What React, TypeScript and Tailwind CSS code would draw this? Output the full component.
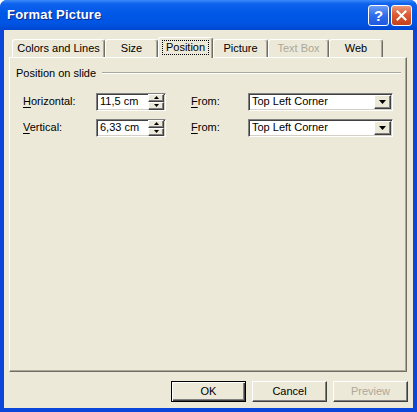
import React from "react";

const raised =
  "bg-[#ECE9D8] border border-t-white border-l-white border-r-[#404040] border-b-[#404040] shadow-[inset_-1px_-1px_0_#808080]";
const sunken =
  "bg-white border border-t-[#808080] border-l-[#808080] border-r-white border-b-white shadow-[inset_1px_1px_0_#404040,inset_-1px_-1px_0_#D4D0C8]";

function Tab({ label, width, selected, disabled }: { label: string; width: number; selected?: boolean; disabled?: boolean }) {
  if (selected) {
    return (
      <div
        className="relative z-10 -mb-px h-[21px] flex items-start justify-center pt-[3px] bg-[#ECE9D8] border-t border-l border-white border-r border-r-[#716F64] rounded-t-[3px] shadow-[inset_-1px_0_0_#ACA899]"
        style={{ width }}
      >
        <span className="outline outline-1 outline-dotted outline-black px-[3px] leading-[13px]">{label}</span>
      </div>
    );
  }
  return (
    <div
      className={`h-[18px] flex items-center justify-center bg-[#ECE9D8] border-t border-l border-white border-r border-r-[#716F64] rounded-t-[3px] shadow-[inset_-1px_0_0_#ACA899] ${
        disabled ? "text-[#ACA899]" : "text-black"
      }`}
      style={{ width }}
    >
      {label}
    </div>
  );
}

function Spinner({ value }: { value: string }) {
  return (
    <div className={`${sunken} w-[70px] h-[18px] flex items-center pl-[3px] pr-[1px]`}>
      <span className="flex-1">{value}</span>
      <div className="flex flex-col w-[16px] h-[16px]">
        <div className={`${raised} h-[8px] flex items-center justify-center`}>
          <svg width="5" height="3" viewBox="0 0 5 3">
            <path d="M2.5 0 L5 3 L0 3 Z" fill="#000" />
          </svg>
        </div>
        <div className={`${raised} h-[8px] flex items-center justify-center`}>
          <svg width="5" height="3" viewBox="0 0 5 3">
            <path d="M0 0 L5 0 L2.5 3 Z" fill="#000" />
          </svg>
        </div>
      </div>
    </div>
  );
}

function Select({ value }: { value: string }) {
  return (
    <div className={`${sunken} w-[145px] h-[18px] flex items-center pl-[3px] pr-[1px]`}>
      <span className="flex-1">{value}</span>
      <div className={`${raised} w-[17px] h-[14px] flex items-center justify-center`}>
        <svg width="7" height="4" viewBox="0 0 7 4">
          <path d="M0 0 L7 0 L3.5 4 Z" fill="#000" />
        </svg>
      </div>
    </div>
  );
}

function Button({ label, isDefault, disabled }: { label: string; isDefault?: boolean; disabled?: boolean }) {
  return (
    <div
      className={`w-[75px] h-[21px] flex items-center justify-center bg-[#ECE9D8] ${
        isDefault
          ? "border border-black shadow-[inset_1px_1px_0_#fff,inset_-1px_-1px_0_#404040,inset_-2px_-2px_0_#808080]"
          : "border border-t-white border-l-white border-r-[#404040] border-b-[#404040] shadow-[inset_-1px_-1px_0_#808080]"
      } ${disabled ? "text-[#ACA899]" : "text-black"}`}
    >
      {label}
    </div>
  );
}

function Row({ mnemonic, rest, value }: { mnemonic: string; rest: string; value: string }) {
  return (
    <div className="flex items-center h-[18px] pl-[13px]">
      <span className="w-[73px]">
        <span className="underline underline-offset-2">{mnemonic}</span>
        {rest}
      </span>
      <Spinner value={value} />
      <span className="ml-[25px] w-[57px]">
        <span className="underline underline-offset-2">F</span>rom:
      </span>
      <Select value="Top Left Corner" />
    </div>
  );
}

export default function App() {
  return (
    <div className="w-[417px] h-[412px] flex flex-col bg-[#0A46DA] rounded-t-[7px] overflow-hidden font-['Liberation_Sans',Arial,sans-serif] text-[11px] text-black">
      {/* title bar */}
      <div className="h-[30px] flex items-center justify-between pl-[7px] pr-[5px] bg-[linear-gradient(180deg,#3D8BF9_0%,#0F63EE_12%,#0058E6_45%,#0054E3_80%,#0046D0_100%)]">
        <span className="text-white text-[13px] font-bold tracking-[0.2px] [text-shadow:1px_1px_0_#0A2A8A]">Format Picture</span>
        <div className="flex gap-[2px]">
          <div className="w-[21px] h-[21px] rounded-[3px] border border-white flex items-center justify-center bg-[linear-gradient(180deg,#6B9CF6_0%,#2F6DEB_50%,#1F58E0_100%)]">
            <span className="text-white text-[15px] font-bold leading-none">?</span>
          </div>
          <div className="w-[21px] h-[21px] rounded-[3px] border border-white flex items-center justify-center bg-[linear-gradient(180deg,#E99A7C_0%,#DD5A32_45%,#C4421C_100%)]">
            <svg width="11" height="11" viewBox="0 0 11 11">
              <path d="M1.5 1.5 L9.5 9.5 M9.5 1.5 L1.5 9.5" stroke="#fff" strokeWidth="2" strokeLinecap="square" />
            </svg>
          </div>
        </div>
      </div>

      {/* client */}
      <div className="flex-1 mx-[4px] mb-[4px] bg-[#ECE9D8] flex flex-col">
        <div className="h-[27px] flex items-end pl-[8px]">
          <Tab label="Colors and Lines" width={93} />
          <Tab label="Size" width={53} />
          <Tab label="Position" width={55} selected />
          <Tab label="Picture" width={55} />
          <Tab label="Text Box" width={61} disabled />
          <Tab label="Web" width={54} />
        </div>

        <div className="ml-[5px] mr-[6px] h-[315px] border-t border-l border-white border-r border-b border-r-[#716F64] border-b-[#716F64] shadow-[inset_-1px_-1px_0_#ACA899] pt-[7px]">
          <div className="flex items-center pl-[6px] pr-[5px] gap-[6px]">
            <span>Position on slide</span>
            <div className="flex-1 border-t border-t-[#ACA899] border-b border-b-white" />
          </div>
          <div className="mt-[11px] flex flex-col gap-[8px]">
            <Row mnemonic="H" rest="orizontal:" value="11,5 cm" />
            <Row mnemonic="V" rest="ertical:" value="6,33 cm" />
          </div>
        </div>

        <div className="mt-[9px] flex justify-end gap-[6px] pr-[5px]">
          <Button label="OK" isDefault />
          <Button label="Cancel" />
          <Button label="Preview" disabled />
        </div>
      </div>
    </div>
  );
}
